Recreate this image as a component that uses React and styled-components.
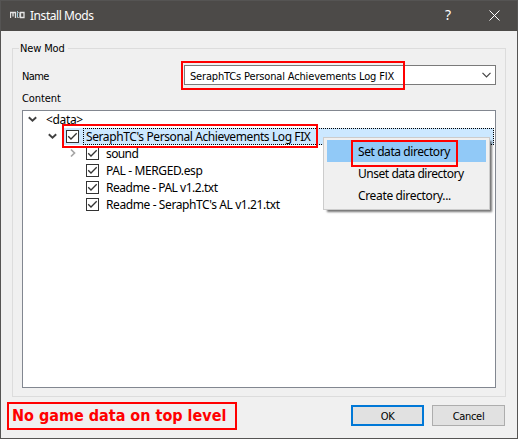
import React from "react";
import styled, { createGlobalStyle } from "styled-components";

const GlobalStyle = createGlobalStyle`
  * { box-sizing: border-box; }
  body { margin: 0; }
`;

const Window = styled.div`
  position: relative;
  width: 518px;
  height: 439px;
  display: flex;
  flex-direction: column;
  background: #f0f0f0;
  border: 1px solid #555453;
  overflow: hidden;
  color: #000;
  font: 12px/16px "Noto Sans", sans-serif;
`;

const TitleBar = styled.header`
  height: 30px;
  flex: none;
  display: flex;
  align-items: center;
  padding: 0 17px 2px 9px;
  background: #4c4a48;
  color: #fff;
`;

const Title = styled.h1`
  margin: 2px auto 0 5px;
  font-size: 12px;
  font-weight: 400;
`;

const Label = styled.span`
  white-space: pre;
  letter-spacing: ${(p) => p.$track || 0}px;
`;

const FormLabel = styled(Label)`
  font-family: "DejaVu Sans Condensed", "DejaVu Sans", sans-serif;
  font-stretch: condensed;
  font-size: 11px;
`;

const Help = styled.span`
  width: 8px;
  margin-right: 36px;
  font-size: 14px;
`;

const Group = styled.fieldset`
  flex: none;
  display: flex;
  flex-direction: column;
  width: 494px;
  height: 357px;
  margin: 9px 0 0 11px;
  padding: 9px 9px 8px;
  border: 1px solid #dcdcdc;
  min-width: 0;
`;

const Legend = styled.legend`
  height: 16px;
  padding: 1px 3px 0 1px;
  margin-left: -3px;
  line-height: 16px;
  display: flex;
`;

const NameRow = styled.div`
  display: flex;
  align-items: center;
  justify-content: space-between;
  height: 20px;
  line-height: 18px;

  ${FormLabel} {
    padding-top: 3px;
  }
`;

const Combo = styled.div`
  width: 312px;
  height: 20px;
  display: flex;
  align-items: center;
  justify-content: space-between;
  padding: 0 4px 0 5px;
  border: 1px solid #7a7a7a;
  background: #fff;
`;

const ContentLabel = styled.div`
  display: flex;
  height: 16px;
  margin: 6px 0 3px;
`;

const Tree = styled.div`
  flex: none;
  width: 474px;
  height: 278px;
  border: 1px solid #828790;
  background: #fff;
`;

const TreeRow = styled.div`
  display: flex;
  align-items: center;
  height: 17px;
  padding-left: ${(p) => p.$depth * 20}px;
`;

const Arrow = styled.span`
  flex: none;
  display: flex;
  width: 20px;
  height: 17px;
`;

const RowText = styled.div`
  display: flex;
  align-items: center;
  flex: 1;
  height: 17px;
  padding: 1px 0 0 2px;
  margin-right: 1px;
  border: 1px dotted ${(p) => (p.$selected ? "#000" : "transparent")};
  background: ${(p) => (p.$selected ? "#cce8ff" : "transparent")};
`;

const CheckCell = styled.span`
  display: flex;
  align-items: center;
  flex: none;
  width: 20px;
  height: 17px;
  padding-left: 3px;
  background: ${(p) => (p.$selected ? "#cce8ff" : "transparent")};
`;

const Footer = styled.footer`
  display: flex;
  gap: 8px;
  padding: 8px 12px 0 350px;
`;

const Button = styled.button`
  width: 73px;
  height: 21px;
  padding: 1px 0 0;
  display: flex;
  align-items: center;
  justify-content: center;
  border: ${(p) => (p.$primary ? "2px solid #0078d7" : "1px solid #adadad")};
  background: #e1e1e1;
  color: #000;
`;

const Menu = styled.div`
  position: absolute;
  left: 322px;
  top: 136px;
  width: 167px;
  height: 73px;
  padding: 2px 3px;
  border: 1px solid #ccc;
  background: #f0f0f0;
  box-shadow: 3px 3px 2px -1px rgba(0, 0, 0, 0.55);
`;

const MenuItem = styled.div`
  display: flex;
  align-items: center;
  height: 22px;
  padding: 2px 0 0 31px;
  background: ${(p) => (p.$active ? "#91c9f7" : "transparent")};
`;

const Callout = styled.div`
  position: absolute;
  left: ${(p) => p.$x - 1}px;
  top: ${(p) => p.$y - 1}px;
  width: ${(p) => p.$w}px;
  height: ${(p) => p.$h}px;
  border: 2px solid #f00;
  pointer-events: none;
`;

const Note = styled(Callout)`
  display: flex;
  align-items: center;
  padding-left: 3px;
  color: #f00;
  font: bold 16px/20px "DejaVu Sans Condensed", "DejaVu Sans", sans-serif;
  font-stretch: condensed;
`;

function AppLogo() {
  return (
    <svg width="15" height="8" viewBox="0 0 15 8" fill="none" stroke="#e4e4e4">
      <path d="M.5 7V1.5H5.5V7M3 2V5.5" strokeWidth="1.3" />
      <path d="M7.5 0V7" stroke="#9ed0e4" />
      <path d="M7 1.5H9.5V6.5H7" stroke="#aaa" />
      <path d="M10.5 1.5H14V6.5H10.5Z" strokeWidth="1.3" />
    </svg>
  );
}

function Check() {
  return (
    <svg width="13" height="13" viewBox="0 0 13 13" fill="none">
      <rect x=".5" y=".5" width="12" height="12" fill="#fff" stroke="#333" />
      <path d="M2.2 6.2L5 9L10.7 3.3" stroke="#333" strokeWidth="1.3" />
    </svg>
  );
}

function TreeArrow({ open }) {
  return (
    <svg width="20" height="17" viewBox="0 0 20 17" fill="none">
      {open ? (
        <path d="M5.8 6.3L9.5 9.8L13.2 6.3" stroke="#404040" strokeWidth="1.9" />
      ) : (
        <path d="M8 4.5L11.5 8L8 11.5" stroke="#a6a6a6" strokeWidth="1.7" />
      )}
    </svg>
  );
}

const rows = [
  { text: "<data>", depth: 0, open: true, track: -0.35 },
  { text: "SeraphTC's Personal Achievements Log FIX", depth: 1, open: true, check: true, selected: true, track: -0.4 },
  { text: "sound", depth: 2, open: false, check: true, track: -0.6 },
  { text: "PAL - MERGED.esp", depth: 2, check: true, track: -0.38 },
  { text: "Readme - PAL v1.2.txt", depth: 2, check: true, track: -0.47 },
  { text: "Readme - SeraphTC's AL v1.21.txt", depth: 2, check: true, track: -0.4 },
];

const menuItems = [
  { text: "Set data directory", active: true, track: -0.42 },
  { text: "Unset data directory", track: -0.46 },
  { text: "Create directory...", track: -0.35 },
];

export default function App() {
  return (
    <>
      <GlobalStyle />
      <Window>
        <TitleBar>
          <AppLogo />
          <Title><Label $track={-0.45}>Install Mods</Label></Title>
          <Help>?</Help>
          <svg width="11" height="11" viewBox="0 0 11 11" stroke="#fff">
            <path d="M.5 .5L10.5 10.5M10.5 .5L.5 10.5" />
          </svg>
        </TitleBar>
        <Group>
          <Legend><FormLabel $track={-0.15}>New Mod</FormLabel></Legend>
          <NameRow>
            <FormLabel $track={-0.6}>Name</FormLabel>
            <Combo>
              <FormLabel $track={-0.16}>SeraphTCs Personal Achievements Log FIX</FormLabel>
              <svg width="9" height="6" viewBox="0 0 9 6" fill="none" stroke="#444">
                <path d="M.5 .8L4.5 4.8L8.5 .8" strokeWidth="1.2" />
              </svg>
            </Combo>
          </NameRow>
          <ContentLabel><FormLabel $track={-0.1}>Content</FormLabel></ContentLabel>
          <Tree>
            {rows.map((r) => (
              <TreeRow key={r.text} $depth={r.depth}>
                <Arrow>{r.open !== undefined && <TreeArrow open={r.open} />}</Arrow>
                {r.check && <CheckCell $selected={r.selected}><Check /></CheckCell>}
                <RowText $selected={r.selected}><Label $track={r.track}>{r.text}</Label></RowText>
              </TreeRow>
            ))}
          </Tree>
        </Group>
        <Footer>
          <Button $primary><FormLabel $track={-0.3}>OK</FormLabel></Button>
          <Button><FormLabel $track={-0.3}>Cancel</FormLabel></Button>
        </Footer>
        <Menu>
          {menuItems.map((m) => (
            <MenuItem key={m.text} $active={m.active}><Label $track={m.track}>{m.text}</Label></MenuItem>
          ))}
        </Menu>
        <Callout $x={181} $y={61} $w={224} $h={29} />
        <Callout $x={62} $y={124} $w={256} $h={24} />
        <Callout $x={351} $y={140} $w={107} $h={27} />
        <Note $x={7} $y={402} $w={230} $h={28}><Label>No game data on top level</Label></Note>
      </Window>
    </>
  );
}
